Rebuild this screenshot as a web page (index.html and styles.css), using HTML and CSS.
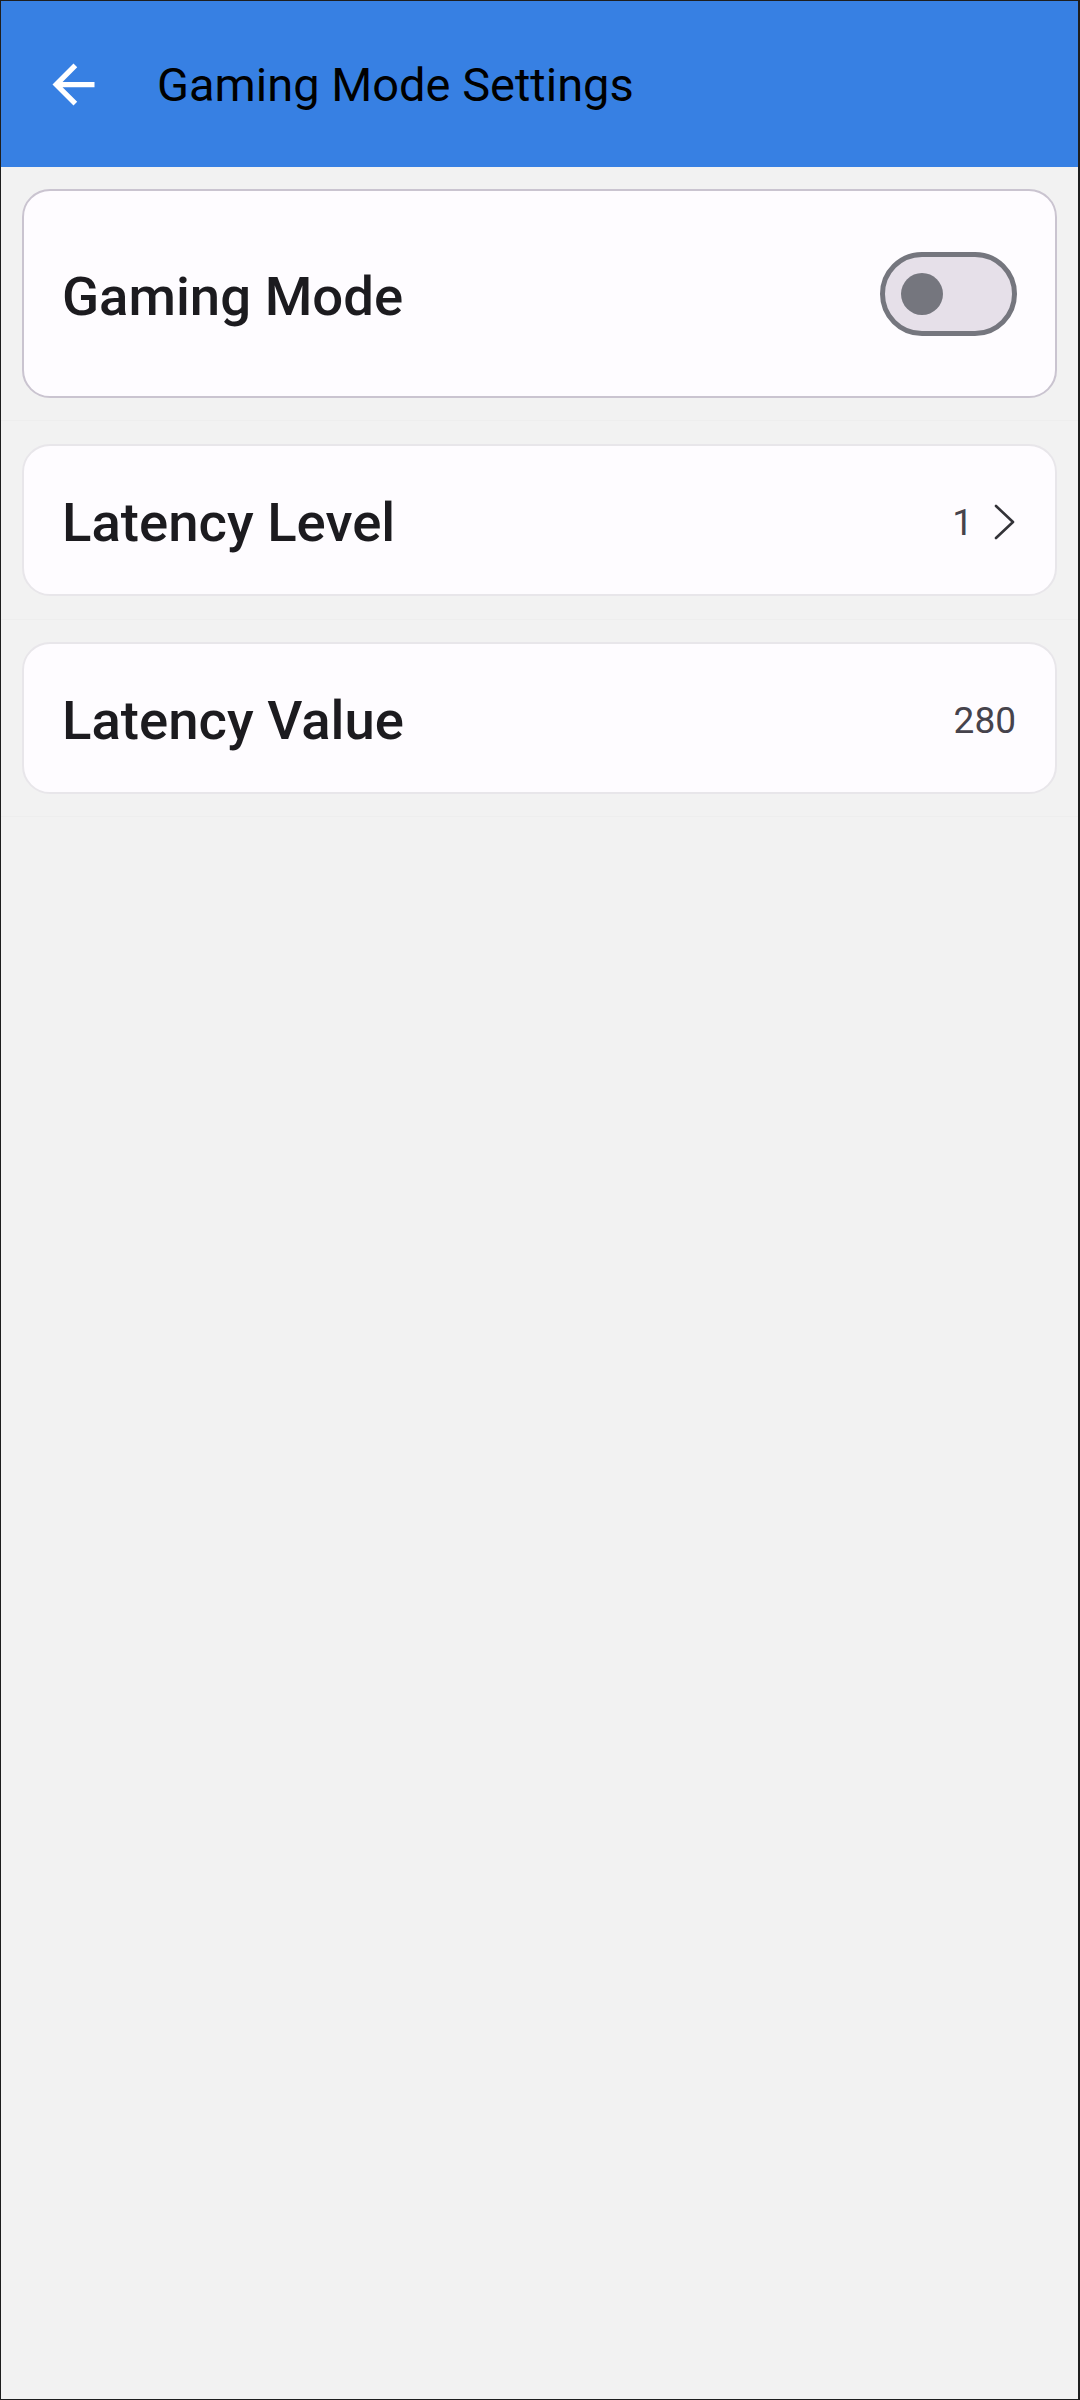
FILE: index.html
```html
<!DOCTYPE html>
<html>
<head>
<meta charset="utf-8">
<link rel="stylesheet" href="styles.css">
</head>
<body>
<div class="screen">
  <header class="appbar">
    <svg class="back" viewBox="0 0 24 24" width="63" height="63"><path d="M20 11H7.83l5.59-5.59L12 4l-8 8 8 8 1.41-1.41L7.83 13H20v-2z" fill="#ffffff"/></svg>
    <div class="title">Gaming Mode Settings</div>
  </header>
  <main class="list">
    <div class="item">
      <div class="card card-outlined card-tall">
        <div class="label">Gaming Mode</div>
        <div class="switch"><div class="thumb"></div></div>
      </div>
    </div>
    <div class="item item-mid">
      <div class="card">
        <div class="label">Latency Level</div>
        <div class="value-group">
          <span class="value">1</span>
          <svg class="chevron" viewBox="0 0 24 36" width="24" height="36"><polyline points="2,2 19,18 2,34" fill="none" stroke="#333338" stroke-width="2.6" stroke-linecap="round" stroke-linejoin="round"/></svg>
        </div>
      </div>
    </div>
    <div class="item">
      <div class="card card-last">
        <div class="label">Latency Value</div>
        <span class="value">280</span>
      </div>
    </div>
  </main>
</div>
</body>
</html>
```
FILE: styles.css
```css
html, body {
  margin: 0;
  padding: 0;
}
body {
  font-family: Roboto, "Noto Sans", sans-serif;
  background: #f2f2f2;
}
.screen {
  width: 1080px;
  height: 2400px;
  box-sizing: border-box;
  border-top: 1px solid #1e1e1e;
  border-left: 1px solid #1e1e1e;
  border-right: 2px solid #1e1e1e;
  border-bottom: 1px solid #1e1e1e;
  background: #f2f2f2;
  display: flex;
  flex-direction: column;
}
.appbar {
  height: 166px;
  background: #3780e3;
  display: flex;
  align-items: center;
  padding-left: 41px;
  gap: 52px;
  flex-shrink: 0;
}
.back {
  display: block;
  flex-shrink: 0;
}
.title {
  font-size: 47px;
  font-weight: 400;
  color: #000000;
  letter-spacing: 0;
}
.list {
  display: flex;
  flex-direction: column;
}
.item {
  padding: 22px 21px 22px 21px;
  border-bottom: 1px solid #eeeeee;
}
.item-mid {
  padding-top: 23px;
  padding-bottom: 23px;
}
.card {
  background: #fefcff;
  border: 2px solid #e8e6ea;
  border-radius: 28px;
  height: 152px;
  box-sizing: border-box;
  display: flex;
  align-items: center;
  justify-content: space-between;
  padding: 4px 39px 0 38px;
}
.card-outlined {
  border-color: #cac4d0;
}
.card-tall {
  height: 209px;
  padding-right: 38px;
}
.label {
  font-size: 54.5px;
  font-weight: 500;
  color: #1c1b1f;
}
.value-group {
  display: flex;
  align-items: center;
  gap: 21px;
  margin-right: -2px;
}
.value {
  font-size: 37px;
  font-weight: 400;
  color: #46434c;
}
.chevron {
  display: block;
}
.switch {
  width: 137px;
  height: 84px;
  box-sizing: border-box;
  border: 5px solid #75767e;
  border-radius: 42px;
  background: #e6e0e9;
  display: flex;
  align-items: center;
  padding-left: 16px;
  margin-top: -4px;
}
.thumb {
  width: 42px;
  height: 42px;
  border-radius: 50%;
  background: #75767e;
}
```
